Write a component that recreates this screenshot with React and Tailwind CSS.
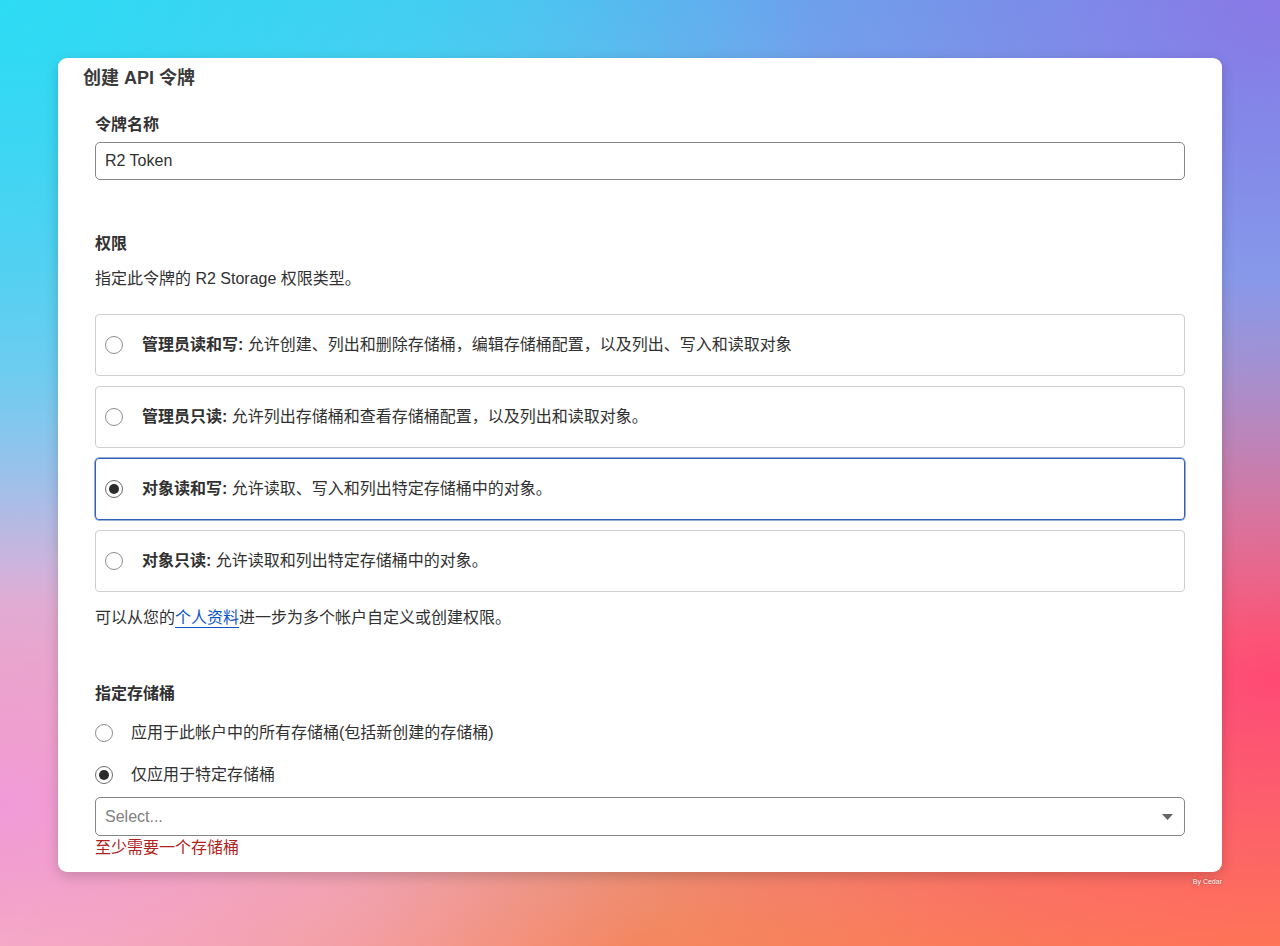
import { useState } from 'react';

const permissionOptions = [
    {
        id: 'admin-rw',
        title: '管理员读和写:',
        desc: '允许创建、列出和删除存储桶，编辑存储桶配置，以及列出、写入和读取对象',
    },
    {
        id: 'admin-r',
        title: '管理员只读:',
        desc: '允许列出存储桶和查看存储桶配置，以及列出和读取对象。',
    },
    {
        id: 'object-rw',
        title: '对象读和写:',
        desc: '允许读取、写入和列出特定存储桶中的对象。',
    },
    {
        id: 'object-r',
        title: '对象只读:',
        desc: '允许读取和列出特定存储桶中的对象。',
    },
];

const Radio = ({ checked }) => (
    <span
        className={`flex h-[18px] w-[18px] shrink-0 items-center justify-center rounded-full border bg-white ${
            checked ? 'border-[#6b6b6b]' : 'border-[#8e8e8e]'
        }`}
    >
        {checked && <span className="h-[10px] w-[10px] rounded-full bg-[#2b2b2b]" />}
    </span>
);

const App = () => {
    const [tokenName, setTokenName] = useState('R2 Token');
    const [permission, setPermission] = useState('object-rw');
    const [scope, setScope] = useState('specific');

    return (
        <div className="min-h-screen w-full bg-[image:radial-gradient(ellipse_at_0%_0%,#2ddcf4_0%,transparent_45%),radial-gradient(ellipse_at_100%_0%,#8a78e6_0%,transparent_48%),radial-gradient(ellipse_at_100%_72%,#ff4a74_0%,transparent_42%),radial-gradient(ellipse_at_100%_100%,#ff8a48_0%,transparent_50%),radial-gradient(ellipse_at_0%_85%,#f09ad8_0%,transparent_38%),radial-gradient(ellipse_at_0%_100%,#ffc6a0_0%,transparent_35%),linear-gradient(180deg,#55c2f0_0%,#b6c3ec_60%,#f08468_100%)] px-[58px] pt-[58px] font-['Liberation_Sans','Noto_Sans_CJK_SC',sans-serif] text-[#313131]">
            <div className="w-[1164px] rounded-[9px] bg-white px-[37px] pb-[12px] pt-[6px] shadow-[0_4px_14px_rgba(0,0,0,0.18)]">
                <h1 className="-ml-[12px] text-[18px] font-semibold leading-[28px] text-[#3a3a3a]">创建 API 令牌</h1>

                {/* token name */}
                <div className="mt-[21px]">
                    <label className="block text-[16px] font-semibold leading-[24px]">令牌名称</label>
                    <input
                        value={tokenName}
                        onChange={(e) => setTokenName(e.target.value)}
                        className="mt-[5px] h-[38px] w-full rounded-[5px] border border-[#858585] px-[9px] text-[16px] text-[#313131] outline-none"
                    />
                </div>

                {/* permissions */}
                <div className="mt-[52px]">
                    <div className="text-[16px] font-semibold leading-[24px]">权限</div>
                    <p className="mt-[11px] text-[16px] leading-[24px]">指定此令牌的 R2 Storage 权限类型。</p>
                    <div className="mt-[23px] flex flex-col gap-[10px]">
                        {permissionOptions.map((opt) => {
                            const active = permission === opt.id;
                            return (
                                <button
                                    key={opt.id}
                                    onClick={() => setPermission(opt.id)}
                                    className={`flex h-[62px] w-full items-center rounded-[4px] border px-[9px] text-left ${
                                        active ? 'border-[#2f62b4] shadow-[0_0_0_0.5px_#2f62b4]' : 'border-[#cfcfcf]'
                                    }`}
                                >
                                    <Radio checked={active} />
                                    <span className="ml-[19px] text-[16px] leading-[24px]">
                                        <span className="font-semibold">{opt.title}</span> {opt.desc}
                                    </span>
                                </button>
                            );
                        })}
                    </div>
                    <p className="mt-[14px] text-[16px] leading-[24px]">
                        可以从您的
                        <a href="#" className="text-[#0a54c4] underline decoration-[#0a54c4] underline-offset-[4px]">
                            个人资料
                        </a>
                        进一步为多个帐户自定义或创建权限。
                    </p>
                </div>

                {/* bucket scope */}
                <div className="mt-[52px]">
                    <div className="text-[16px] font-semibold leading-[24px]">指定存储桶</div>
                    <div className="mt-[15px] flex flex-col gap-[18px]">
                        <button onClick={() => setScope('all')} className="flex items-center text-left">
                            <Radio checked={scope === 'all'} />
                            <span className="ml-[18px] text-[16px] leading-[24px]">应用于此帐户中的所有存储桶(包括新创建的存储桶)</span>
                        </button>
                        <button onClick={() => setScope('specific')} className="flex items-center text-left">
                            <Radio checked={scope === 'specific'} />
                            <span className="ml-[18px] text-[16px] leading-[24px]">仅应用于特定存储桶</span>
                        </button>
                    </div>
                    <div className="mt-[10px] flex h-[39px] w-full items-center justify-between rounded-[5px] border border-[#858585] pl-[9px] pr-[11px]">
                        <span className="text-[16px] text-[#808080]">Select...</span>
                        <svg width="11" height="6" viewBox="0 0 11 6">
                            <path d="M0 0 L11 0 L5.5 6 Z" fill="#666" />
                        </svg>
                    </div>
                    <p className="text-[16px] leading-[24px] text-[#b0221b]">至少需要一个存储桶</p>
                </div>
            </div>
            <div className="flex w-[1164px] justify-end pt-[5px]">
                <span className="text-[7px] text-white [text-shadow:0_0_2px_rgba(120,40,20,0.8)]">By Cedar</span>
            </div>
        </div>
    );
};

export default App;
